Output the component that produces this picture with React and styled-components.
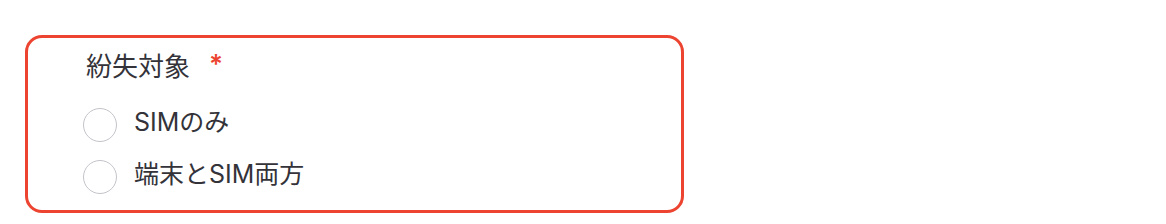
import styled, { createGlobalStyle } from 'styled-components';

const GlobalStyle = createGlobalStyle`
	body {
		margin: 0;
		background: #ffffff;
		font-family: "Inter", "Noto Sans CJK JP", sans-serif;
	}
`;

const options = ['SIMのみ', '端末とSIM両方'];

export default function App() {
	return (
		<>
			<GlobalStyle />
			<Field>
				<Legend>
					紛失対象
					<Required>*</Required>
				</Legend>
				<OptionList>
					{options.map((opt) => (
						<Option key={opt}>
							<Radio />
							<OptionText>{opt}</OptionText>
						</Option>
					))}
				</OptionList>
			</Field>
		</>
	);
}

const Field = styled.div`
	box-sizing: border-box;
	margin: 35px 0 0 25px;
	width: 659px;
	height: 178px;
	border: 3px solid #ec4430;
	border-radius: 17px;
	padding: 12px 0 0 55px;
	display: flex;
	flex-direction: column;
`;

const Legend = styled.div`
	display: flex;
	align-items: center;
	height: 34px;
	padding-left: 3px;
	font-size: 26px;
	line-height: 1;
	color: #333339;
`;

const Required = styled.span`
	color: #ec4430;
	font-size: 26px;
	font-weight: 600;
	margin-left: 19px;
	position: relative;
	top: -3px;
`;

const OptionList = styled.div`
	display: flex;
	flex-direction: column;
	margin-top: 15px;
`;

const Option = styled.label`
	display: flex;
	align-items: center;
	height: 52px;
	gap: 17px;
`;

const Radio = styled.span`
	box-sizing: border-box;
	width: 34px;
	height: 34px;
	border-radius: 50%;
	border: 1.5px solid #c3c3ca;
	background: #fff;
	flex-shrink: 0;
`;

const OptionText = styled.span`
	font-size: 25px;
	line-height: 1;
	color: #333339;
	position: relative;
	top: -3px;
`;
